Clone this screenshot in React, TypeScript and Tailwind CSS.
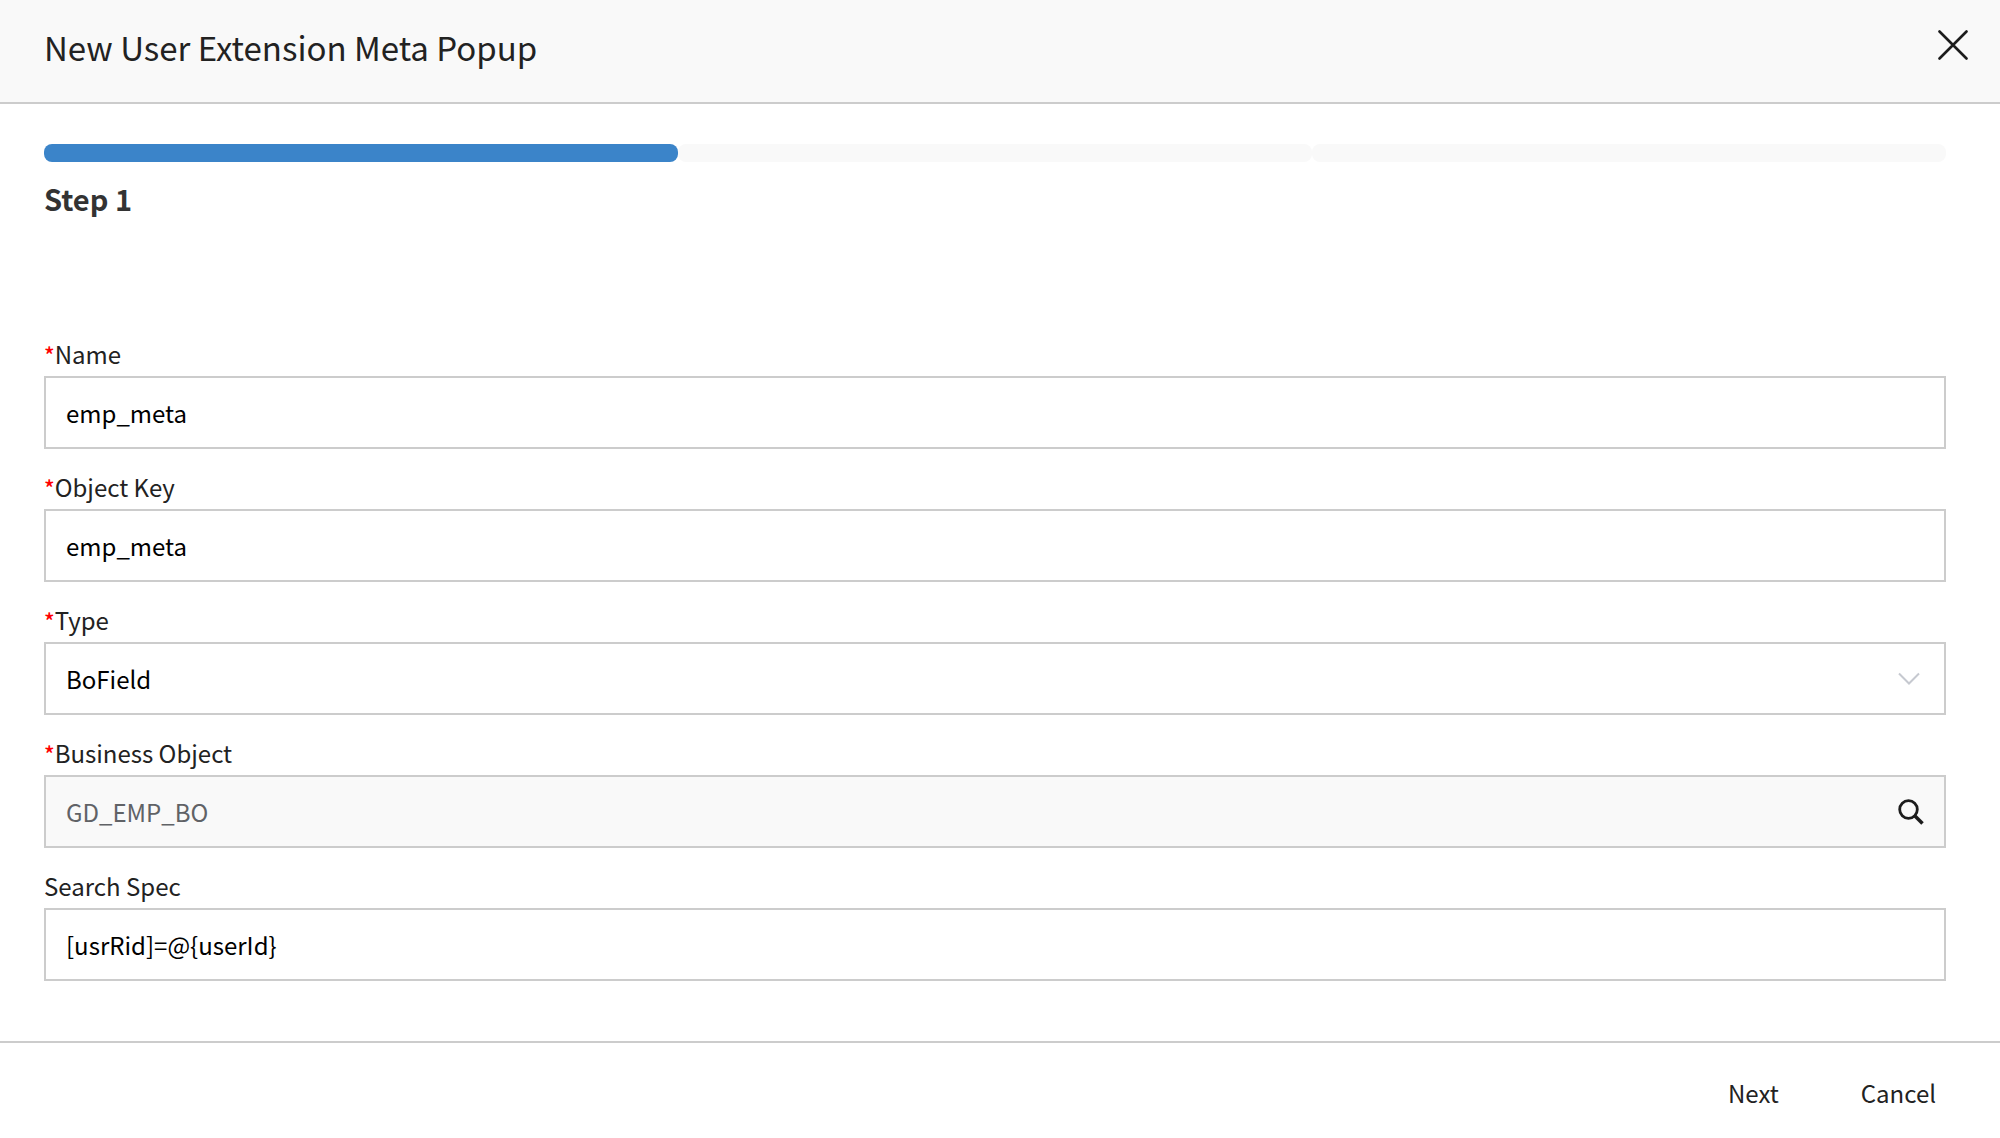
import { useState } from "react";
import type { ReactNode } from "react";

const STEPS = 3;

const fieldBox = "h-[73px] w-full border-2 border-[#cccccc] bg-white px-5 outline-none";

type FieldProps = {
  id: string;
  label: string;
  required?: boolean;
  children: ReactNode;
};

const Field = ({ id, label, required, children }: FieldProps) => (
  <div>
    <label htmlFor={id} className="flex h-[60px] items-center pt-4 text-[#222222]">
      {required ? <span className="text-[22px] font-medium text-[#ff0000]">*</span> : null}
      {label}
    </label>
    {children}
  </div>
);

const CloseIcon = () => (
  <svg width="30" height="30" viewBox="0 0 30 30" fill="none" stroke="#1c1c1c" strokeWidth="2.6" strokeLinecap="round">
    <path d="M1.5 1.5 28.5 28.5M28.5 1.5 1.5 28.5" />
  </svg>
);

const ChevronIcon = () => (
  <svg width="22" height="14" viewBox="0 0 22 14" fill="none" stroke="#c6c9d0" strokeWidth="2">
    <path d="M1 1.5 11 11.5 21 1.5" />
  </svg>
);

const SearchIcon = () => (
  <svg width="26" height="26" viewBox="0 0 26 26" fill="none" stroke="#1c1c1c">
    <circle cx="10.5" cy="10.5" r="8.8" strokeWidth="2.8" />
    <path d="M16.5 16.5 24.5 24.5" strokeWidth="3.6" />
  </svg>
);

const StepBar = ({ current }: { current: number }) => (
  <div>
    <div className="flex">
      {Array.from({ length: STEPS }, (_, i) => (
        <div
          key={i}
          className={`h-[18px] flex-1 rounded-lg ${i < current ? "bg-[#3b84c9]" : "bg-[#f9f9f9]"}`}
        />
      ))}
    </div>
    <p className="mt-4 text-[29px] leading-10 font-bold text-[#333333]">Step {current}</p>
  </div>
);

export default function App() {
  const [name, setName] = useState("emp_meta");
  const [objectKey, setObjectKey] = useState("emp_meta");
  const [type, setType] = useState("BoField");
  const [searchSpec, setSearchSpec] = useState("[usrRid]=@{userId}");

  return (
    <div className="flex min-h-screen flex-col bg-white font-['Noto_Sans_CJK_KR','Noto_Sans',sans-serif] text-[24px] leading-9 text-black">
      <header className="flex h-[104px] items-center justify-between border-b-2 border-[#cccccc] bg-[#f9f9f9] pr-8 pl-11">
        <h1 className="mb-2 text-[33px] leading-[50px] text-[#222222]">New User Extension Meta Popup</h1>
        <button type="button" aria-label="Close" className="mb-3">
          <CloseIcon />
        </button>
      </header>

      <main className="flex-1 pt-10 pr-[54px] pl-11">
        <StepBar current={1} />

        <form className="mt-[98px]">
          <Field id="name" label="Name" required>
            <input id="name" className={fieldBox} value={name} onChange={(e) => setName(e.target.value)} />
          </Field>
          <Field id="objectKey" label="Object Key" required>
            <input id="objectKey" className={fieldBox} value={objectKey} onChange={(e) => setObjectKey(e.target.value)} />
          </Field>
          <Field id="type" label="Type" required>
            <div className="relative">
              <select
                id="type"
                className={`${fieldBox} block appearance-none`}
                value={type}
                onChange={(e) => setType(e.target.value)}
              >
                <option>BoField</option>
              </select>
              <span className="pointer-events-none absolute inset-y-0 right-[26px] flex items-center">
                <ChevronIcon />
              </span>
            </div>
          </Field>
          <Field id="businessObject" label="Business Object" required>
            <div className="flex h-[73px] items-center border-2 border-[#cccccc] bg-[#f9f9f9] pr-5">
              <input
                id="businessObject"
                className="h-full min-w-0 flex-1 px-5 text-[#606266] outline-none"
                value="GD_EMP_BO"
                readOnly
              />
              <button type="button" aria-label="Search business object">
                <SearchIcon />
              </button>
            </div>
          </Field>
          <Field id="searchSpec" label="Search Spec">
            <input id="searchSpec" className={fieldBox} value={searchSpec} onChange={(e) => setSearchSpec(e.target.value)} />
          </Field>
        </form>
      </main>

      <footer className="flex h-[97px] items-center justify-end gap-[82px] border-t-2 border-[#cccccc] pt-1 pr-16 text-[#222222]">
        <button type="button">Next</button>
        <button type="button">Cancel</button>
      </footer>
    </div>
  );
}
